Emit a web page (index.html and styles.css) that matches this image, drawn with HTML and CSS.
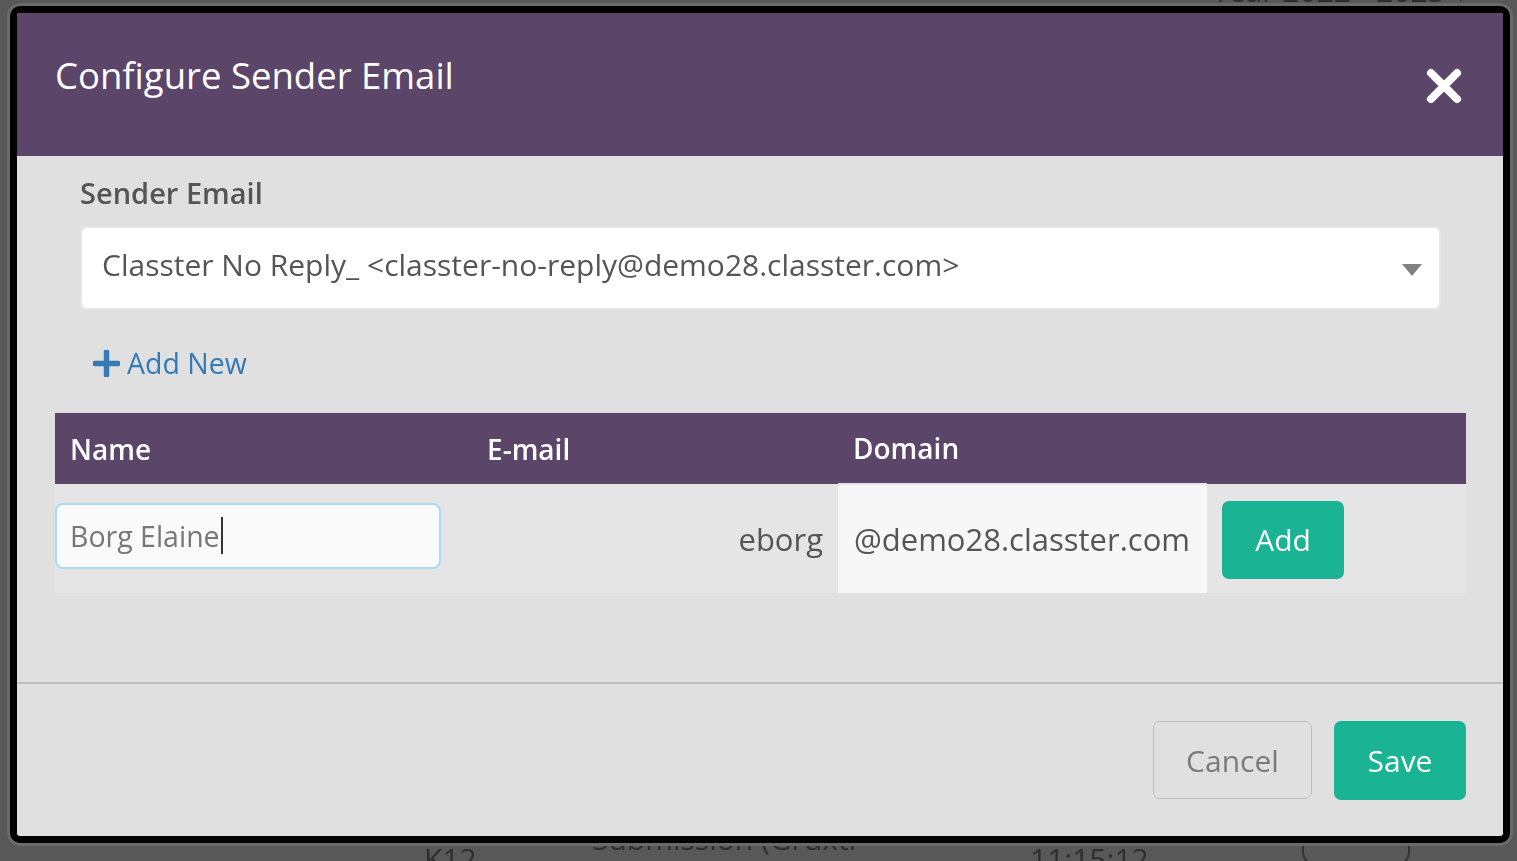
FILE: index.html
```html
<!DOCTYPE html>
<html lang="en">
<head>
    <meta charset="UTF-8">
    <meta name="viewport" content="width=device-width, initial-scale=1.0">
    <title>Configure Sender Email</title>
    <link rel="stylesheet" href="styles.css">
</head>
<body>

<!-- Page behind the overlay -->
<div class="page-behind">
    <span class="bg-text bg-year">Year 2022 - 2023 &#9662;</span>
    <span class="bg-text bg-k12">K12</span>
    <span class="bg-text bg-sub">Submission (Gruxtl</span>
    <span class="bg-text bg-time">11:15:12</span>
    <span class="bg-btn"></span>
</div>

<!-- Modal -->
<div class="modal">
    <div class="modal-header">
        <h3>Configure Sender Email</h3>
        <span class="close">
            <svg width="36" height="36" viewBox="0 0 36 36">
                <path d="M5 5 L31 31 M31 5 L5 31" stroke="#fff" stroke-width="8" stroke-linecap="round"/>
            </svg>
        </span>
    </div>

    <div class="modal-body">
        <div class="form-group">
            <label>Sender Email</label>
            <div class="select-box">
                <span>Classter No Reply_ &lt;classter-no-reply@demo28.classter.com&gt;</span>
                <span class="arrow"></span>
            </div>
            <a href="#" class="add-new">
                <svg width="27" height="27" viewBox="0 0 27 27">
                    <path d="M13.5 2 V25 M2 13.5 H25" stroke="#337ab7" stroke-width="5.5" stroke-linecap="round"/>
                </svg>
                Add New
            </a>
        </div>

        <table class="sender-table">
            <colgroup>
                <col style="width: 417px">
                <col style="width: 366px">
                <col style="width: 369px">
                <col>
            </colgroup>
            <thead>
                <tr>
                    <th>Name</th>
                    <th>E-mail</th>
                    <th>Domain</th>
                    <th></th>
                </tr>
            </thead>
            <tbody>
                <tr>
                    <td class="name-cell">
                        <div class="text-input">Borg Elaine<span class="caret"></span></div>
                    </td>
                    <td class="email-cell">eborg</td>
                    <td class="domain-cell">@demo28.classter.com</td>
                    <td class="btn-cell"><button class="btn-green btn-add">Add</button></td>
                </tr>
            </tbody>
        </table>
    </div>

    <div class="modal-footer">
        <button class="btn-cancel">Cancel</button>
        <button class="btn-green btn-save">Save</button>
    </div>
</div>

</body>
</html>
```

FILE: styles.css
```css
* {
    box-sizing: border-box;
}

body {
    font-family: "Open Sans", Arial, sans-serif;
    margin: 0;
    padding: 6px 0 0 10px;
    background-color: #585858;
    height: 861px;
    overflow: hidden;
}

/* Page behind the overlay */
.page-behind {
    position: fixed;
    inset: 0;
}

.bg-text {
    position: absolute;
    color: #2e2e2e;
    font-size: 30px;
    font-family: "Open Sans", sans-serif;
}

.bg-year { top: -30px; left: 1212px; }
.bg-k12 { top: 838px; left: 424px; }
.bg-sub { top: 818px; left: 592px; }
.bg-time { top: 838px; left: 1030px; }

.bg-btn {
    position: absolute;
    top: 826px;
    left: 1302px;
    width: 108px;
    height: 40px;
    border: 2px solid #333;
    border-radius: 14px;
}

/* Modal */
.modal {
    position: relative;
    width: 1500px;
    height: 837px;
    border: 7px solid #000;
    border-radius: 10px;
    box-shadow: 0 0 0 3px #6a6a6a;
    background-color: #e0e0e0;
    display: flex;
    flex-direction: column;
    overflow: hidden;
}

.modal-header {
    background-color: #5b4569;
    height: 143px;
    flex-shrink: 0;
    padding: 37px 41px 0 38px;
    display: flex;
    justify-content: space-between;
    align-items: flex-start;
}

.modal-header h3 {
    margin: 0;
    color: #fff;
    font-size: 36.5px;
    font-weight: 500;
}

.close {
    margin-top: 18px;
    display: block;
    height: 36px;
    cursor: pointer;
}

.modal-body {
    flex: 1;
    padding: 17px 37px 0 38px;
    border-bottom: 2px solid #bdbdbd;
}

.form-group {
    padding: 0 25px;
}

.form-group label {
    display: block;
    color: #555;
    font-size: 29px;
    font-weight: 600;
}

.select-box {
    margin-top: 14px;
    height: 84px;
    background-color: #fff;
    border: 2px solid #e6e6e6;
    border-radius: 7px;
    padding: 0 17px 0 20px;
    display: flex;
    align-items: center;
    justify-content: space-between;
    color: #555;
    font-size: 30px;
}

.select-box span:first-child {
    margin-top: -8px;
}

.arrow {
    width: 0;
    height: 0;
    border-left: 10px solid transparent;
    border-right: 10px solid transparent;
    border-top: 12px solid #808080;
    margin-top: 4px;
}

.add-new {
    display: inline-flex;
    align-items: center;
    gap: 7px;
    margin: 34px 0 0 13px;
    color: #337ab7;
    text-decoration: none;
    font-size: 28.5px;
}

/* Table */
.sender-table {
    width: 100%;
    border-collapse: collapse;
    table-layout: fixed;
    margin-top: 31px;
}

.sender-table th {
    background-color: #5b4569;
    color: #fff;
    height: 71px;
    padding: 0 15px;
    text-align: left;
    font-size: 28px;
    font-weight: 600;
}

.sender-table td {
    background-color: #e5e5e5;
    height: 109px;
    color: #555;
    font-size: 31px;
}

.name-cell {
    padding: 2px 31px 8px 0;
}

.text-input {
    height: 66px;
    background-color: #fafafa;
    border: 2px solid #a9dcf0;
    border-radius: 8px;
    padding: 0 13px;
    display: flex;
    align-items: center;
    color: #777;
    font-size: 28.5px;
}

.caret {
    display: inline-block;
    width: 2px;
    height: 37px;
    background-color: #333;
    margin-left: 1px;
}

.email-cell {
    text-align: right;
    padding: 0 15px 0 0;
}

.sender-table td.domain-cell {
    background-color: #f7f7f7;
    padding: 0 0 0 16px;
    border-top: 2px solid #e5e5e5;
}

.btn-cell {
    padding: 2px 15px 0;
}

/* Buttons */
button {
    font-family: "Open Sans", Arial, sans-serif;
    font-size: 30px;
    border-radius: 7px;
    cursor: pointer;
}

.btn-green {
    background-color: #1ab394;
    color: #fff;
    border: none;
}

.btn-add {
    width: 122px;
    height: 78px;
    display: block;
}

.modal-footer {
    height: 152px;
    flex-shrink: 0;
    padding: 37px 37px 0 0;
    display: flex;
    justify-content: flex-end;
    align-items: flex-start;
    gap: 22px;
}

.btn-cancel {
    width: 159px;
    height: 78px;
    background-color: transparent;
    border: 1px solid #bbb;
    color: #7a7a7a;
}

.btn-save {
    width: 132px;
    height: 79px;
}
```
